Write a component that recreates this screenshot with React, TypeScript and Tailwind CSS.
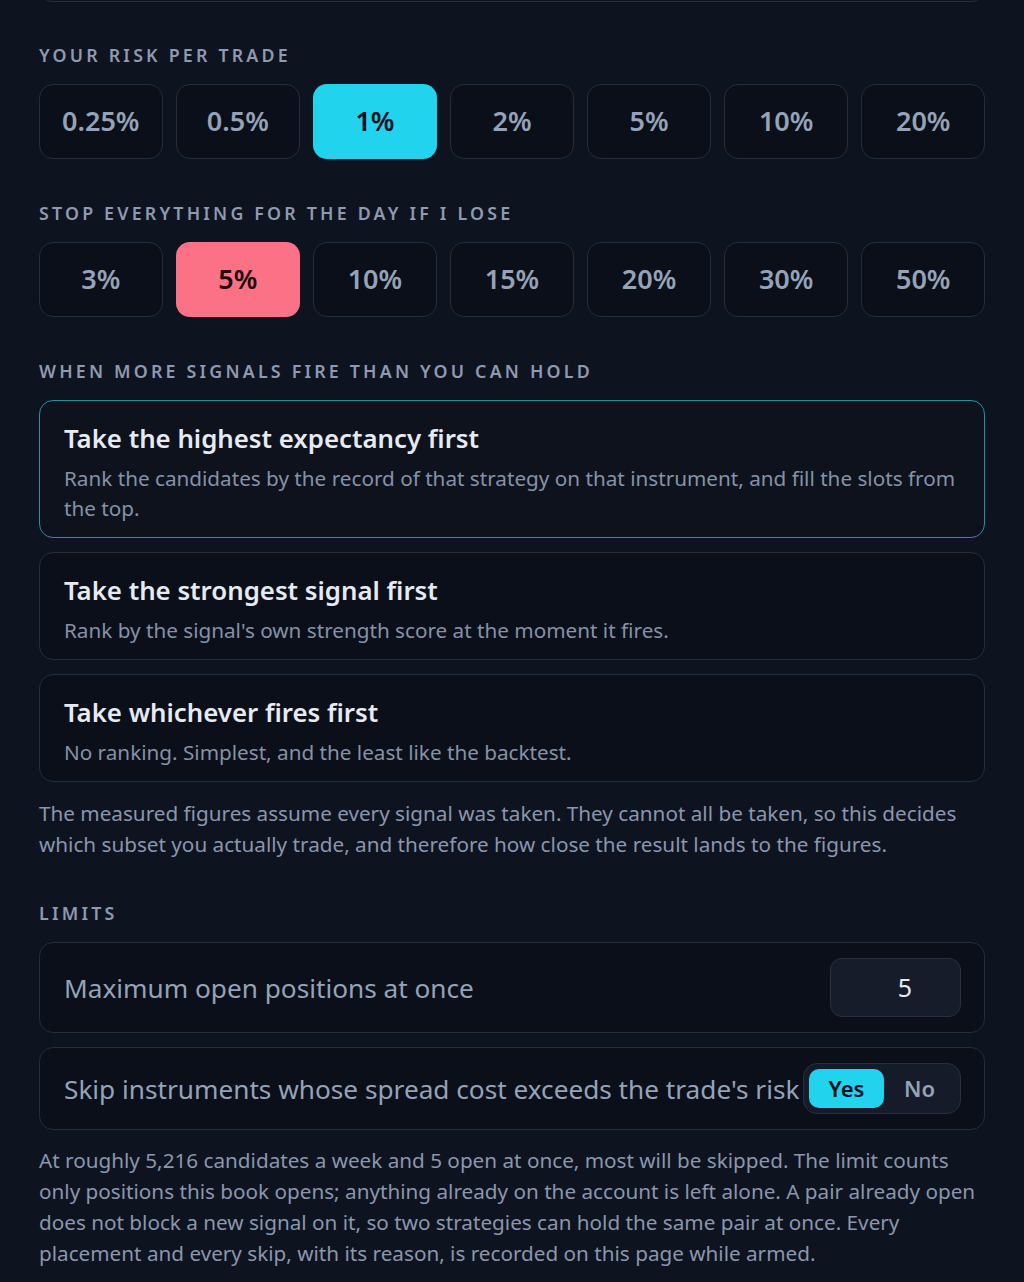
import React from "react";

const risk = ["0.25%", "0.5%", "1%", "2%", "5%", "10%", "20%"];
const stop = ["3%", "5%", "10%", "15%", "20%", "30%", "50%"];

const options = [
  {
    title: "Take the highest expectancy first",
    desc: "Rank the candidates by the record of that strategy on that instrument, and fill the slots from the top.",
    active: true,
  },
  {
    title: "Take the strongest signal first",
    desc: "Rank by the signal's own strength score at the moment it fires.",
    active: false,
  },
  {
    title: "Take whichever fires first",
    desc: "No ranking. Simplest, and the least like the backtest.",
    active: false,
  },
];

function Label({ children }: { children: React.ReactNode }) {
  return (
    <div className="text-[17.8px] leading-[26px] font-semibold tracking-[0.18em] text-[#8e9ab0] uppercase mb-[16px]">
      {children}
    </div>
  );
}

function Chips({ items, active, activeCls }: { items: string[]; active: number; activeCls: string }) {
  return (
    <div className="grid grid-cols-7 gap-[13.5px]">
      {items.map((t, i) => (
        <div
          key={t}
          className={
            "h-[75px] rounded-[14px] flex items-center justify-center text-[27px] font-semibold " +
            (i === active ? activeCls : "bg-[#0b0f19] border border-[#252d3d] text-[#94a3b8]")
          }
        >
          {t}
        </div>
      ))}
    </div>
  );
}

export default function App() {
  return (
    <div
      className="min-h-[1282px] bg-[#0e1320] px-[39px] pb-[20px] overflow-hidden"
      style={{ fontFamily: '"Noto Sans", sans-serif' }}
    >
      <div className="h-[14px] -mt-[12px] border-x border-b border-[#282f3e] rounded-b-[14px]" />

      <div className="pt-[40px]">
        <Label>Your risk per trade</Label>
        <Chips items={risk} active={2} activeCls="bg-[#22d3ee] text-[#06101c]" />
      </div>

      <div className="pt-[41px]">
        <Label>Stop everything for the day if I lose</Label>
        <Chips items={stop} active={1} activeCls="bg-[#fb7185] text-[#1a0a10]" />
      </div>

      <div className="pt-[41px]">
        <Label>When more signals fire than you can hold</Label>
        <div className="flex flex-col gap-[14px]">
          {options.map((o) => (
            <div
              key={o.title}
              className={
                "rounded-[14px] border px-[24px] pt-[18px] pb-[14px] " +
                (o.active ? "border-[#2290a2] bg-[#0d121d]" : "border-[#252d3d] bg-[#0b0f19]")
              }
            >
              <div className="text-[25.8px] leading-[38px] font-semibold text-[#e6ebf2]">{o.title}</div>
              <div className="mt-[6px] text-[20.7px] leading-[30px] text-[#8592a8]">{o.desc}</div>
            </div>
          ))}
        </div>
        <p className="mt-[16px] text-[20.7px] leading-[31px] text-[#8a97ad]">
          The measured figures assume every signal was taken. They cannot all be taken, so this decides which
          subset you actually trade, and therefore how close the result lands to the figures.
        </p>
      </div>

      <div className="pt-[40px]">
        <Label>Limits</Label>
        <div className="flex flex-col gap-[14px]">
          <div className="rounded-[14px] border border-[#252d3d] bg-[#0b0f19] pl-[24px] pr-[23px] py-[15px] flex items-center justify-between">
            <span className="text-[26.2px] leading-[38px] text-[#94a3b8]">Maximum open positions at once</span>
            <div className="w-[131px] h-[59px] rounded-[12px] border border-[#282f40] bg-[#171c2b] flex items-center justify-end pr-[48px] text-[25px] text-[#e5e9f0]">
              5
            </div>
          </div>
          <div className="rounded-[14px] border border-[#252d3d] bg-[#0b0f19] pl-[24px] pr-[23px] py-[15px] flex items-center justify-between">
            <span className="text-[26.2px] leading-[38px] text-[#94a3b8] whitespace-nowrap">
              Skip instruments whose spread cost exceeds the trade's risk
            </span>
            <div className="h-[51px] rounded-[14px] border border-[#282f40] bg-[#161b29] p-[5px] flex items-center shrink-0">
              <div className="w-[75px] h-[39px] rounded-[10px] bg-[#22d3ee] text-[#06101c] text-[22px] font-semibold flex items-center justify-center">
                Yes
              </div>
              <div className="w-[71px] h-[39px] rounded-[10px] text-[#94a3b8] text-[22px] font-semibold flex items-center justify-center">
                No
              </div>
            </div>
          </div>
        </div>
        <p className="mt-[15px] text-[20.7px] leading-[31px] text-[#8a97ad]">
          At roughly 5,216 candidates a week and 5 open at once, most will be skipped. The limit counts only
          positions this book opens; anything already on the account is left alone. A pair already open does not
          block a new signal on it, so two strategies can hold the same pair at once. Every placement and every
          skip, with its reason, is recorded on this page while armed.
        </p>
      </div>
    </div>
  );
}
